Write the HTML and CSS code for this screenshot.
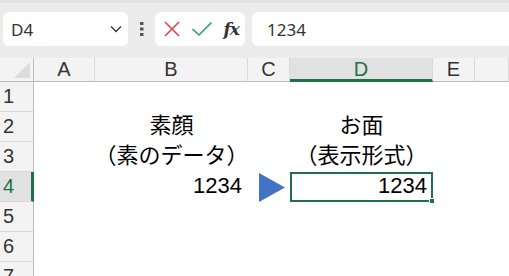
FILE: index.html
```html
<!DOCTYPE html>
<html lang="ja">
<head>
    <meta charset="UTF-8">
    <title>素顔とお面</title>
    <link rel="stylesheet" href="styles.css">
</head>
<body>
    <div class="toolbar">
        <div class="namebox">
            <span>D4</span>
            <svg class="chevron" width="12" height="8" viewBox="0 0 12 8"><path d="M1 1.5 L6 6.5 L11 1.5" fill="none" stroke="#333" stroke-width="1.3"/></svg>
        </div>
        <div class="dots">
            <svg width="4" height="14" viewBox="0 0 4 14"><rect x="0" y="0" width="3.5" height="3" fill="#555"/><rect x="0" y="5.5" width="3.5" height="3" fill="#555"/><rect x="0" y="11" width="3.5" height="3" fill="#555"/></svg>
        </div>
        <div class="fxbox">
            <svg width="18" height="18" viewBox="0 0 18 18"><path d="M2 2 L16 16 M16 2 L2 16" stroke="#e0474c" stroke-width="1.6" fill="none"/></svg>
            <svg width="22" height="16" viewBox="0 0 22 16"><path d="M1.5 8 L8 14 L20.5 1.5" stroke="#2e9e5b" stroke-width="1.6" fill="none"/></svg>
            <span class="fx">fx</span>
        </div>
        <div class="formula">1234</div>
    </div>

    <div class="sheet">
        <div class="corner"></div>
        <div class="colhead">A</div>
        <div class="colhead">B</div>
        <div class="colhead">C</div>
        <div class="colhead selected">D</div>
        <div class="colhead">E</div>
        <div class="colhead"></div>

        <div class="rowhead">1</div>
        <div class="cell"></div><div class="cell"></div><div class="cell"></div><div class="cell"></div><div class="cell"></div><div class="cell"></div>

        <div class="rowhead">2</div>
        <div class="cell"></div>
        <div class="cell center">素顔</div>
        <div class="cell"></div>
        <div class="cell center">お面</div>
        <div class="cell"></div><div class="cell"></div>

        <div class="rowhead">3</div>
        <div class="cell"></div>
        <div class="cell center">（素のデータ）</div>
        <div class="cell"></div>
        <div class="cell center">（表示形式）</div>
        <div class="cell"></div><div class="cell"></div>

        <div class="rowhead selected">4</div>
        <div class="cell"></div>
        <div class="cell number">1234</div>
        <div class="cell arrow">
            <svg width="26" height="29" viewBox="0 0 26 29"><polygon points="0,0 26,14.5 0,29" fill="#4472c4"/></svg>
        </div>
        <div class="cell number active">1234<span class="handle"></span></div>
        <div class="cell"></div><div class="cell"></div>

        <div class="rowhead">5</div>
        <div class="cell"></div><div class="cell"></div><div class="cell"></div><div class="cell"></div><div class="cell"></div><div class="cell"></div>

        <div class="rowhead">6</div>
        <div class="cell"></div><div class="cell"></div><div class="cell"></div><div class="cell"></div><div class="cell"></div><div class="cell"></div>

        <div class="rowhead">7</div>
        <div class="cell"></div><div class="cell"></div><div class="cell"></div><div class="cell"></div><div class="cell"></div><div class="cell"></div>
    </div>
</body>
</html>
```

FILE: styles.css
```css
* {
    margin: 0;
    padding: 0;
    box-sizing: border-box;
}

body {
    width: 509px;
    height: 276px;
    overflow: hidden;
    background-color: #ffffff;
    font-family: "Liberation Sans", "Noto Sans CJK JP", sans-serif;
    color: #000;
}

/* Formula bar */
.toolbar {
    display: flex;
    align-items: flex-start;
    height: 58px;
    padding: 12px 0 0 3px;
    background-color: #ececec;
    border-top: 3px solid #e2e2e2;
    padding-top: 9px;
}

.namebox,
.fxbox,
.formula {
    height: 34px;
    background-color: #fff;
    border-radius: 6px;
    display: flex;
    align-items: center;
}

.namebox {
    width: 125px;
    padding: 0 6px 0 8px;
    justify-content: space-between;
    font-family: "Noto Sans", "Liberation Sans", sans-serif;
    font-size: 17px;
    color: #333;
}

.dots {
    width: 27px;
    height: 34px;
    display: flex;
    align-items: center;
    justify-content: center;
}

.fxbox {
    width: 90px;
    padding: 0 6px 0 8px;
    justify-content: space-between;
}

.fx {
    font-family: "DejaVu Serif", "Liberation Serif", serif;
    font-style: italic;
    font-weight: bold;
    font-size: 17px;
    color: #333;
    letter-spacing: -1px;
}

.formula {
    flex: 1;
    margin-left: 7px;
    margin-right: -10px;
    padding-left: 15px;
    font-family: "Noto Sans", "Liberation Sans", sans-serif;
    font-size: 17px;
    color: #333;
}

/* Sheet */
.sheet {
    display: grid;
    grid-template-columns: 34px 61px 153px 42px 143px 42px 1fr;
    grid-template-rows: 24px repeat(7, 30px);
}

.corner {
    background-color: #f3f3f3;
    border-right: 1px solid #bdbdbd;
    border-bottom: 1px solid #bdbdbd;
    position: relative;
    overflow: hidden;
}

.corner::after {
    content: "";
    position: absolute;
    right: 3px;
    bottom: 3px;
    border-left: 16px solid transparent;
    border-bottom: 16px solid #dcdcdc;
}

.colhead {
    background-color: #f3f3f3;
    border-right: 1px solid #d9d9d9;
    border-bottom: 1px solid #bdbdbd;
    display: flex;
    align-items: center;
    justify-content: center;
    font-size: 20px;
    color: #333;
}

.colhead.selected {
    background-color: #e1e1e1;
    color: #1e7145;
    border-bottom: 3px solid #1e7145;
    padding-top: 2px;
}

.rowhead {
    background-color: #f3f3f3;
    border-right: 1px solid #bdbdbd;
    border-bottom: 1px solid #d9d9d9;
    display: flex;
    align-items: center;
    padding-left: 3px;
    font-size: 20px;
    color: #333;
}

.rowhead.selected {
    background-color: #e1e1e1;
    color: #1e7145;
    border-right: 3px solid #1e7145;
}

.cell {
    display: flex;
    align-items: flex-end;
    padding: 0 6px 3px;
    font-size: 22px;
    line-height: 26px;
    white-space: nowrap;
}

.cell.center {
    justify-content: center;
}

.cell.number {
    justify-content: flex-end;
}

.cell.arrow {
    align-items: center;
    justify-content: flex-end;
    padding: 0 5px 0 0;
}

.cell.active {
    position: relative;
    border: 2px solid #1e7145;
    padding: 0 4px 1px;
}

.handle {
    position: absolute;
    right: -4px;
    bottom: -4px;
    width: 6px;
    height: 6px;
    background-color: #1e7145;
    border: 1px solid #fff;
}
```
